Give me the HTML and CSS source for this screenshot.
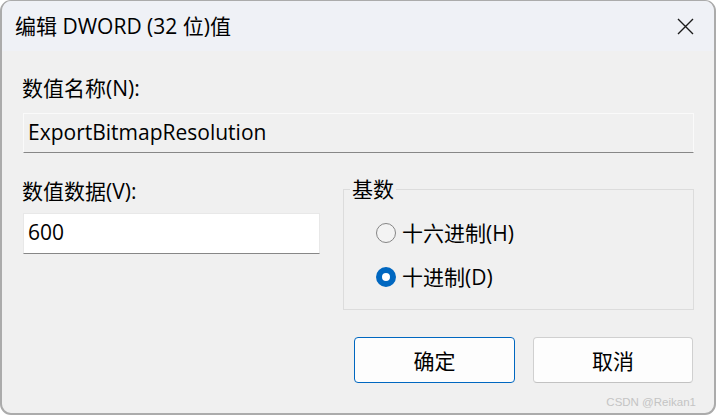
FILE: index.html
```html
<!DOCTYPE html>
<html lang="zh-CN">
<head>
<meta charset="utf-8">
<title>编辑 DWORD (32 位)值</title>
<link rel="stylesheet" href="styles.css">
</head>
<body>
<div class="window">
  <div class="titlebar">
    <span class="title">编辑 DWORD (32 位)值</span>
    <span class="close">
      <svg width="17" height="17" viewBox="0 0 17 17"><path d="M1 1 L16 16 M16 1 L1 16" stroke="#1b1b1b" stroke-width="1.4" fill="none"/></svg>
    </span>
  </div>
  <div class="content">
    <div class="label">数值名称(N):</div>
    <div class="field field-readonly">ExportBitmapResolution</div>
    <div class="row">
      <div class="col">
        <div class="label">数值数据(V):</div>
        <div class="field field-edit">600</div>
      </div>
      <fieldset class="group">
        <legend class="legend">基数</legend>
        <div class="option"><span class="radio"></span><span>十六进制(H)</span></div>
        <div class="option"><span class="radio checked"></span><span>十进制(D)</span></div>
      </fieldset>
    </div>
    <div class="buttons">
      <button class="btn btn-default">确定</button>
      <button class="btn">取消</button>
    </div>
  </div>
  <div class="watermark">CSDN @Reikan1</div>
</div>
</body>
</html>
```
FILE: styles.css
```css
html, body {
  margin: 0;
  padding: 0;
  background: #ffffff;
}
body {
  font-family: "Open Sans", "Noto Sans CJK SC", sans-serif;
  color: #000;
}
.window {
  position: relative;
  width: 716px;
  height: 415px;
  box-sizing: border-box;
  border: 2px solid #ababab;
  border-top-width: 1px;
  border-radius: 11px;
  background: #f0f0f0;
  overflow: hidden;
  display: flex;
  flex-direction: column;
}
.titlebar {
  height: 50px;
  background: #eff1f6;
  display: flex;
  align-items: center;
  justify-content: space-between;
  padding: 0 20px 0 13px;
  flex-shrink: 0;
}
.title {
  font-size: 21px;
  line-height: 26px;
}
.close {
  display: flex;
  width: 17px;
  height: 17px;
}
.content {
  padding: 23px 20px 0 21px;
  font-size: 21px;
}
.label {
  line-height: 28px;
  height: 28px;
  margin-left: -1px;
}
.field {
  box-sizing: border-box;
  padding: 0 0 3px 4px;
  display: flex;
  align-items: center;
  border-style: solid;
  border-width: 1px;
  border-bottom-color: #878787;
}
.field-readonly {
  margin-top: 11px;
  height: 40px;
  background: #f0f0f0;
  border-color: #fafafa;
  border-bottom-color: #878787;
}
.row {
  display: grid;
  grid-template-columns: 297px 1fr;
  column-gap: 23px;
  margin-top: 24px;
}
.field-edit {
  margin-top: 8px;
  height: 41px;
  background: #ffffff;
  border-color: #e8e8e8;
  border-bottom-color: #878787;
}
.group {
  margin: 0;
  margin-top: -2px;
  padding: 16px 0 0 32px;
  border: 1px solid #dcdcdc;
  height: 135px;
  box-sizing: border-box;
}
.legend {
  padding: 0 2px;
  margin-left: -26px;
  line-height: 28px;
}
.option {
  display: flex;
  align-items: center;
  gap: 6px;
  height: 28px;
  line-height: 28px;
  margin-bottom: 16px;
}
.radio {
  width: 20px;
  height: 20px;
  box-sizing: border-box;
  border-radius: 50%;
  border: 1.5px solid #858585;
  background: #f3f3f3;
  flex-shrink: 0;
}
.radio.checked {
  border: 6px solid #0067c0;
  background: #ffffff;
}
.buttons {
  display: flex;
  justify-content: flex-end;
  gap: 18px;
  margin-top: 27px;
  margin-right: 1px;
}
.btn {
  font: inherit;
  color: #000;
  height: 46px;
  width: 160px;
  background: #fdfdfd;
  border: 1px solid #d0d0d0;
  border-bottom-color: #c2c2c2;
  border-radius: 4px;
  padding: 0;
}
.btn-default {
  width: 161px;
  border: 1.5px solid #0067c0;
}
.watermark {
  position: absolute;
  right: 18px;
  bottom: 5px;
  font-family: "Liberation Sans", sans-serif;
  font-size: 11.5px;
  color: #c4c4c4;
}
```
